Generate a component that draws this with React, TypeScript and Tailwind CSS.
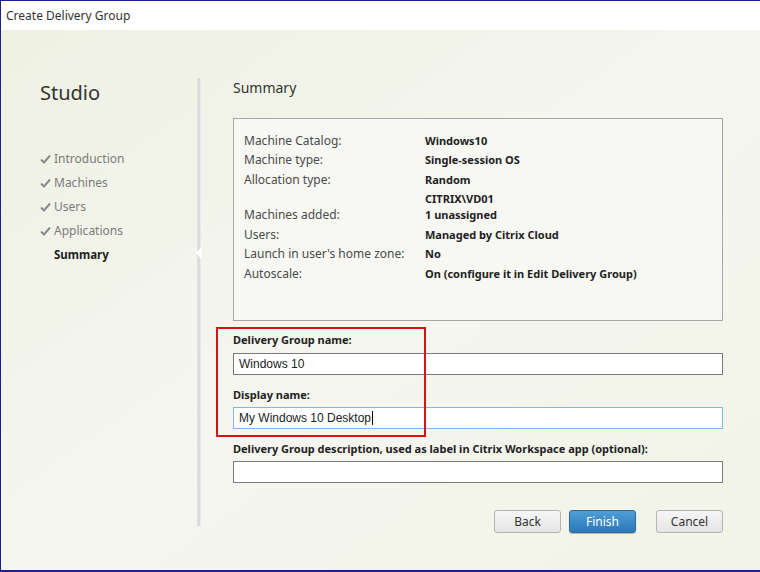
import React from "react";

const rows: { label: string; value: string[] }[] = [
  { label: "Machine Catalog:", value: ["Windows10"] },
  { label: "Machine type:", value: ["Single-session OS"] },
  { label: "Allocation type:", value: ["Random"] },
  { label: "Machines added:", value: ["CITRIX\\VD01", "1 unassigned"] },
  { label: "Users:", value: ["Managed by Citrix Cloud"] },
  { label: "Launch in user's home zone:", value: ["No"] },
  { label: "Autoscale:", value: ["On (configure it in Edit Delivery Group)"] },
];

const steps = ["Introduction", "Machines", "Users", "Applications"];

const Check = () => (
  <svg width="11" height="10" viewBox="0 0 11 10" className="shrink-0">
    <path d="M1 5.5 L4 8.5 L10 1.5" fill="none" stroke="#8a8a8a" strokeWidth="2" />
  </svg>
);

const Btn = ({ label, primary }: { label: string; primary?: boolean }) => (
  <button
    className={
      primary
        ? "h-[23px] w-[67px] rounded-[3px] border border-[#2a6a9e] bg-gradient-to-b from-[#4f9ed6] to-[#2a79b8] text-[12px] text-white shadow-[0_1px_1px_rgba(0,0,0,0.25)]"
        : "h-[23px] w-[67px] rounded-[3px] border border-[#b4b4b4] bg-gradient-to-b from-[#f6f6f6] to-[#e4e4e4] text-[12px] text-[#333]"
    }
  >
    {label}
  </button>
);

export default function App() {
  return (
    <div
      className="flex h-[572px] w-[760px] flex-col border-t border-l border-b-2 border-[#1f1f8a] text-[12px] text-[#333]"
      style={{ fontFamily: "'Noto Sans', 'Open Sans', sans-serif" }}
    >
      <div className="flex h-[29px] shrink-0 items-center bg-white pl-[5px] text-[12px] text-[#333]">
        Create Delivery Group
      </div>
      <div className="flex flex-1 bg-gradient-to-br from-[#eef1e2] via-[#f5f6f0] to-[#f1f4e6]">
        {/* sidebar */}
        <div className="w-[196px] shrink-0 pl-[39px] pt-[50px]">
          <div className="text-[20px] leading-[26px] text-[#333]">Studio</div>
          <div className="mt-[44px] flex flex-col gap-[7px]">
            {steps.map((s) => (
              <div key={s} className="flex h-[17px] items-center gap-[3px] text-[#7b7b7b]">
                <Check />
                <span>{s}</span>
              </div>
            ))}
            <div className="flex h-[17px] items-center pl-[14px] text-[11.5px] font-bold text-[#222]">Summary</div>
          </div>
        </div>
        {/* divider */}
        <div className="relative mt-[48px] h-[448px] w-[4px] shrink-0 bg-gradient-to-r from-[#e4e5e6] via-[#d3d5da] to-[#f0f0f0]">
          <div className="absolute left-[-1px] top-[168px] h-0 w-0 border-y-[7px] border-r-[6px] border-y-transparent border-r-white" />
        </div>
        {/* main */}
        <div className="flex w-[522px] flex-col pl-[32px] pt-[49px]">
          <div className="text-[14px] leading-[18px] text-[#333]">Summary</div>
          <div className="mt-[21px] h-[203px] border border-[#a6a6a6] bg-[#f7f8f3] px-[10px] pt-[12px]">
            {rows.map((r) => (
              <div key={r.label} className="flex items-end py-[1.75px]">
                <div className="w-[181px] leading-[16px] text-[#4a4a4a]">{r.label}</div>
                <div className="flex flex-col text-[11px] font-bold leading-[16px] text-[#222]">
                  {r.value.map((v) => (
                    <span key={v}>{v}</span>
                  ))}
                </div>
              </div>
            ))}
          </div>
          <div className="relative mt-[11px] flex flex-col">
            <div className="pointer-events-none absolute left-[-17px] top-[-5px] h-[110px] w-[210px] border-2 border-[#e01010]" />
            <div className="text-[11px] font-bold leading-[16px] text-[#222]">Delivery Group name:</div>
            <div
              className="mt-[5px] flex h-[22px] items-center border border-[#7a7a7a] bg-white pl-[5px] text-[12px] text-[#222]"
              style={{ fontFamily: "'Liberation Sans', Arial, sans-serif" }}
            >
              Windows 10
            </div>
            <div className="mt-[12px] text-[11px] font-bold leading-[16px] text-[#222]">Display name:</div>
            <div
              className="mt-[4px] flex h-[22px] items-center border border-[#80b6ea] bg-white pl-[5px] text-[12px] text-[#222]"
              style={{ fontFamily: "'Liberation Sans', Arial, sans-serif" }}
            >
              My Windows 10 Desktop
              <span className="ml-px h-[14px] w-px bg-black" />
            </div>
            <div className="mt-[12px] text-[11px] font-bold leading-[16px] text-[#222]">
              Delivery Group description, used as label in Citrix Workspace app (optional):
            </div>
            <div className="mt-[4px] h-[22px] border border-[#7a7a7a] bg-white" />
          </div>
          <div className="mt-[27px] flex justify-end">
            <Btn label="Back" />
            <div className="ml-[8px]">
              <Btn label="Finish" primary />
            </div>
            <div className="ml-[20px]">
              <Btn label="Cancel" />
            </div>
          </div>
        </div>
      </div>
    </div>
  );
}
